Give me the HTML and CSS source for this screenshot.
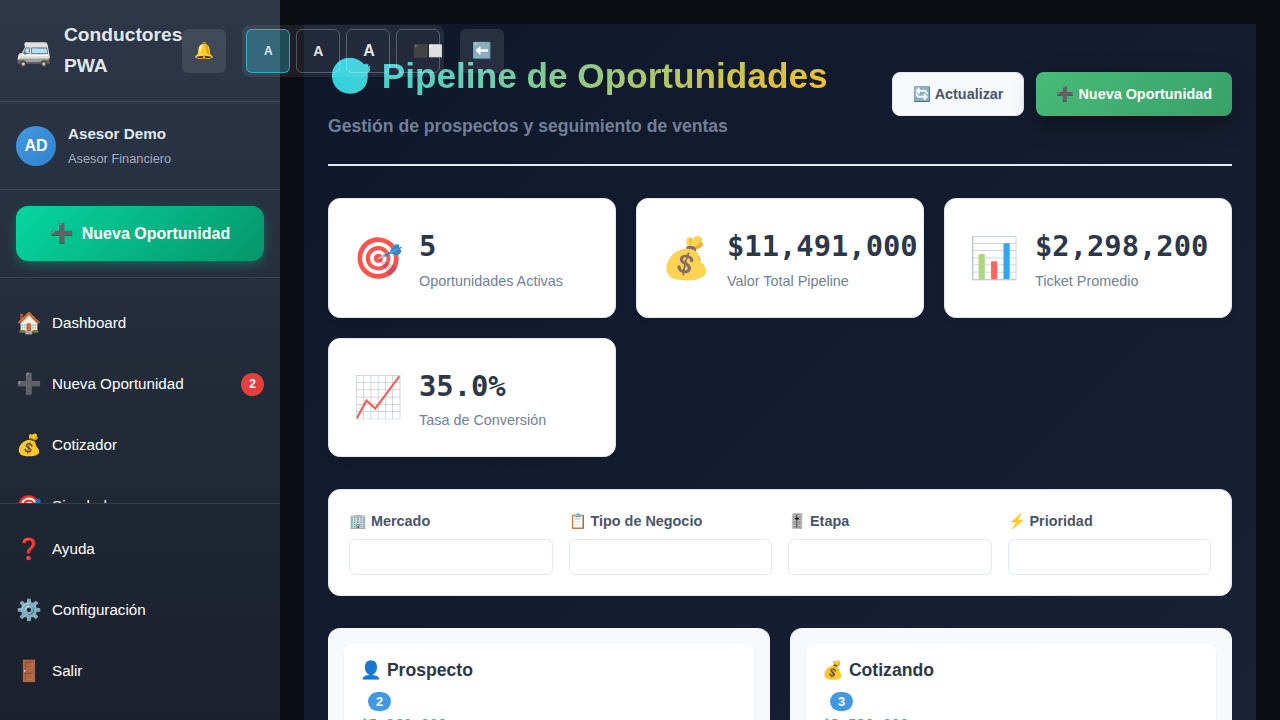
FILE: index.html
```html
<!DOCTYPE html>
<html lang="es">
<head>
<meta charset="utf-8">
<title>Conductores PWA</title>
<link rel="stylesheet" href="styles.css">
</head>
<body>
<aside class="sidebar">
  <header class="sidebar-header">
    <div class="logo"><span class="logo-icon">🚐</span><h2 class="logo-text">Conductores PWA</h2></div>
    <div class="controls">
      <button class="icon-btn">🔔</button>
      <div class="font-group">
        <button class="font-btn small active">A</button>
        <button class="font-btn medium">A</button>
        <button class="font-btn large">A</button>
        <button class="font-btn contrast">⬛⬜</button>
      </div>
      <button class="icon-btn">⬅️</button>
    </div>
  </header>
  <section class="user">
    <div class="avatar">AD</div>
    <div><div class="user-name">Asesor Demo</div><div class="user-role">Asesor Financiero</div></div>
  </section>
  <section class="action">
    <button class="action-btn"><span class="action-icon">➕</span>Nueva Oportunidad</button>
  </section>
  <nav class="nav">
    <a class="item"><span class="item-icon">🏠</span>Dashboard</a>
    <a class="item"><span class="item-icon">➕</span>Nueva Oportunidad<span class="item-badge">2</span></a>
    <a class="item"><span class="item-icon">💰</span>Cotizador</a>
    <a class="item"><span class="item-icon">🎯</span>Simulador</a>
  </nav>
  <footer class="sidebar-footer">
    <a class="item"><span class="item-icon">❓</span>Ayuda</a>
    <a class="item"><span class="item-icon">⚙️</span>Configuración</a>
    <a class="item"><span class="item-icon">🚪</span>Salir</a>
  </footer>
</aside>
<main class="main">
  <div class="page">
    <header class="page-header">
      <div>
        <h1 class="title">🎯 Pipeline de Oportunidades</h1>
        <p class="subtitle">Gestión de prospectos y seguimiento de ventas</p>
      </div>
      <div class="page-actions">
        <button class="btn btn-light">🔄 Actualizar</button>
        <button class="btn btn-green">➕ Nueva Oportunidad</button>
      </div>
    </header>
    <section class="stats">
      <div class="stat"><span class="stat-icon">🎯</span><div><div class="stat-value">5</div><div class="stat-label">Oportunidades Activas</div></div></div>
      <div class="stat"><span class="stat-icon">💰</span><div><div class="stat-value">$11,491,000</div><div class="stat-label">Valor Total Pipeline</div></div></div>
      <div class="stat"><span class="stat-icon">📊</span><div><div class="stat-value">$2,298,200</div><div class="stat-label">Ticket Promedio</div></div></div>
      <div class="stat"><span class="stat-icon">📈</span><div><div class="stat-value">35.0%</div><div class="stat-label">Tasa de Conversión</div></div></div>
    </section>
    <section class="filters">
      <div class="filter"><label>🏢 Mercado</label><div class="select"></div></div>
      <div class="filter"><label>📋 Tipo de Negocio</label><div class="select"></div></div>
      <div class="filter"><label>🎚️ Etapa</label><div class="select"></div></div>
      <div class="filter"><label>⚡ Prioridad</label><div class="select"></div></div>
    </section>
    <section class="board">
      <div class="column"><div class="column-header"><h3 class="column-title">👤 Prospecto</h3><span class="count">2</span><div class="amount">$5,960,000</div></div></div>
      <div class="column"><div class="column-header"><h3 class="column-title">💰 Cotizando</h3><span class="count">3</span><div class="amount">$3,520,000</div></div></div>
    </section>
  </div>
</main>
</body>
</html>
```
FILE: styles.css
```css
* { box-sizing: border-box; margin: 0; padding: 0; }
body {
  display: flex;
  height: 720px;
  overflow: hidden;
  font-family: "Liberation Sans", Arial, sans-serif;
  line-height: 1.6;
  color: #2d3748;
  background: #0a0d12;
}
button { font-family: inherit; border: 0; }
.sidebar {
  position: relative;
  z-index: 2;
  display: flex;
  flex-direction: column;
  flex: none;
  width: 280px;
  height: 720px;
  color: #fff;
  background: linear-gradient(180deg, #2d3748 0%, #1a202c 100%);
}
.sidebar-header {
  display: flex;
  align-items: center;
  justify-content: space-between;
  flex: none;
  padding: 20px 16px;
  border-bottom: 1px solid rgba(255, 255, 255, 0.1);
}
.logo { display: flex; align-items: center; gap: 12px; }
.logo-icon { font-size: 28.8px; width: 36px; line-height: 46px; }
.logo-text { font-size: 19.2px; color: #e2e8f0; }
.controls { display: flex; align-items: center; gap: 16px; }
.icon-btn {
  flex: none;
  width: 44px;
  height: 44px;
  border-radius: 6px;
  font-size: 16px;
  color: #fff;
  background: rgba(255, 255, 255, 0.1);
}
.font-group {
  display: flex;
  gap: 6px;
  flex: none;
  padding: 4px;
  border-radius: 8px;
  background: rgba(255, 255, 255, 0.08);
}
.font-btn {
  width: 44px;
  height: 44px;
  padding: 0 16px;
  border: 1px solid rgba(255, 255, 255, 0.25);
  border-radius: 6px;
  color: #e2e8f0;
  background: transparent;
  font-weight: 600;
  white-space: nowrap;
}
.font-btn.active { background: rgba(34, 211, 238, 0.25); border-color: rgba(34, 211, 238, 0.7); }
.small { font-size: 12px; }
.medium { font-size: 14px; }
.large { font-size: 16px; }
.contrast { font-size: 12px; }
.user {
  display: flex;
  align-items: center;
  gap: 12px;
  flex: none;
  height: 87.8px;
  padding: 0 16px;
  border-bottom: 1px solid rgba(255, 255, 255, 0.1);
}
.avatar {
  display: grid;
  place-items: center;
  width: 40px;
  height: 40px;
  border-radius: 50%;
  font-weight: 700;
  background: linear-gradient(135deg, #4299e1, #3182ce);
}
.user-name { margin-bottom: 2px; font-size: 15.2px; font-weight: 600; color: #e2e8f0; }
.user-role { font-size: 12.8px; color: #a0aec0; }
.action { flex: none; padding: 16px; border-bottom: 1px solid rgba(255, 255, 255, 0.1); }
.action-btn {
  display: flex;
  align-items: center;
  justify-content: center;
  gap: 8px;
  width: 100%;
  height: 55px;
  border-radius: 12px;
  color: #fff;
  font-size: 16px;
  font-weight: 700;
  background: linear-gradient(135deg, #06d6a0 0%, #059669 100%);
  box-shadow: 0 4px 12px rgba(6, 214, 160, 0.3);
}
.action-icon { font-size: 19.2px; }
.nav { flex: 1; min-height: 0; overflow: hidden; padding: 14px 0; }
.item {
  display: flex;
  align-items: center;
  gap: 12px;
  height: 61px;
  padding: 0 16px;
  font-size: 15.2px;
  color: #fff;
}
.item-icon { width: 24px; font-size: 20.8px; white-space: nowrap; }
.item-badge {
  min-width: 23px;
  height: 23px;
  margin: 1px 0 0 auto;
  border-radius: 12px;
  font-size: 12px;
  font-weight: 600;
  line-height: 23px;
  text-align: center;
  background: #e53e3e;
}
.sidebar-footer { flex: none; height: 217px; padding: 14.6px 0 13px; border-top: 1px solid rgba(255, 255, 255, 0.1); }
.main { flex: 1; min-width: 0; height: 720px; overflow: hidden; padding: 24px; }
.page { height: 1700px; padding: 24px; background: linear-gradient(135deg, #0f172a 0%, #1e273b 100%); }
.page-header {
  display: flex;
  align-items: center;
  justify-content: space-between;
  margin-bottom: 32px;
  padding-bottom: 24px;
  border-bottom: 2px solid #e2e8f0;
}
.title {
  margin-bottom: 8px;
  font-size: 35.2px;
  white-space: nowrap;
  color: transparent;
  background: linear-gradient(135deg, #22d3ee, #fbbf24);
  -webkit-background-clip: text;
  background-clip: text;
}
.subtitle { font-size: 17.6px; font-weight: 600; color: #718096; }
.page-actions { display: flex; gap: 12px; }
.btn {
  height: 44px;
  padding: 0 20px;
  border-radius: 8px;
  font-size: 14.4px;
  font-weight: 600;
  white-space: nowrap;
}
.btn-light { color: #4a5568; background: #f7fafc; border: 1px solid #e2e8f0; }
.btn-green {
  color: #fff;
  background: linear-gradient(135deg, #48bb78, #38a169);
  box-shadow: 0 8px 24px rgba(0, 0, 0, 0.35);
}
.stats { display: grid; grid-template-columns: repeat(3, 1fr); gap: 20px; margin-bottom: 32px; }
.stat {
  display: flex;
  align-items: center;
  gap: 16px;
  min-width: 0;
  padding: 24px;
  border: 1px solid #e2e8f0;
  border-radius: 12px;
  background: #fff;
  box-shadow: 0 4px 6px rgba(0, 0, 0, 0.05);
}
.stat-icon { width: 50px; margin-top: 1px; font-size: 40.4px; white-space: nowrap; opacity: 0.8; }
.stat-value { font-family: "DejaVu Sans Mono", monospace; font-size: 28.8px; font-weight: 700; }
.stat-label { font-size: 14.4px; color: #718096; }
.filters {
  display: grid;
  grid-template-columns: repeat(4, 1fr);
  gap: 16px;
  margin-bottom: 32px;
  padding: 20px;
  border: 1px solid #e2e8f0;
  border-radius: 12px;
  background: #fff;
}
.filter { display: flex; flex-direction: column; gap: 6px; }
.filter label { font-size: 14.4px; font-weight: 600; color: #4a5568; }
.select { height: 36px; border: 1px solid #e2e8f0; border-radius: 6px; background: #fff; }
.board { display: grid; grid-template-columns: repeat(2, 1fr); gap: 20px; }
.column { height: 500px; padding: 16px; border-radius: 12px; background: #f7fafc; }
.column-header {
  padding: 12px 16px 16px;
  border-radius: 8px;
  background: #fff;
  box-shadow: 0 2px 4px rgba(0, 0, 0, 0.05);
}
.column-title { margin-bottom: 8px; font-size: 17.6px; }
.count {
  display: block;
  width: 23px;
  height: 19px;
  margin: 0 0 2px 8px;
  border-radius: 10px;
  font-size: 12.8px;
  font-weight: 600;
  line-height: 19px;
  text-align: center;
  color: #fff;
  background: #4299e1;
}
.amount { font-family: "DejaVu Sans Mono", monospace; font-size: 14.4px; font-weight: 600; color: #48bb78; }
```
